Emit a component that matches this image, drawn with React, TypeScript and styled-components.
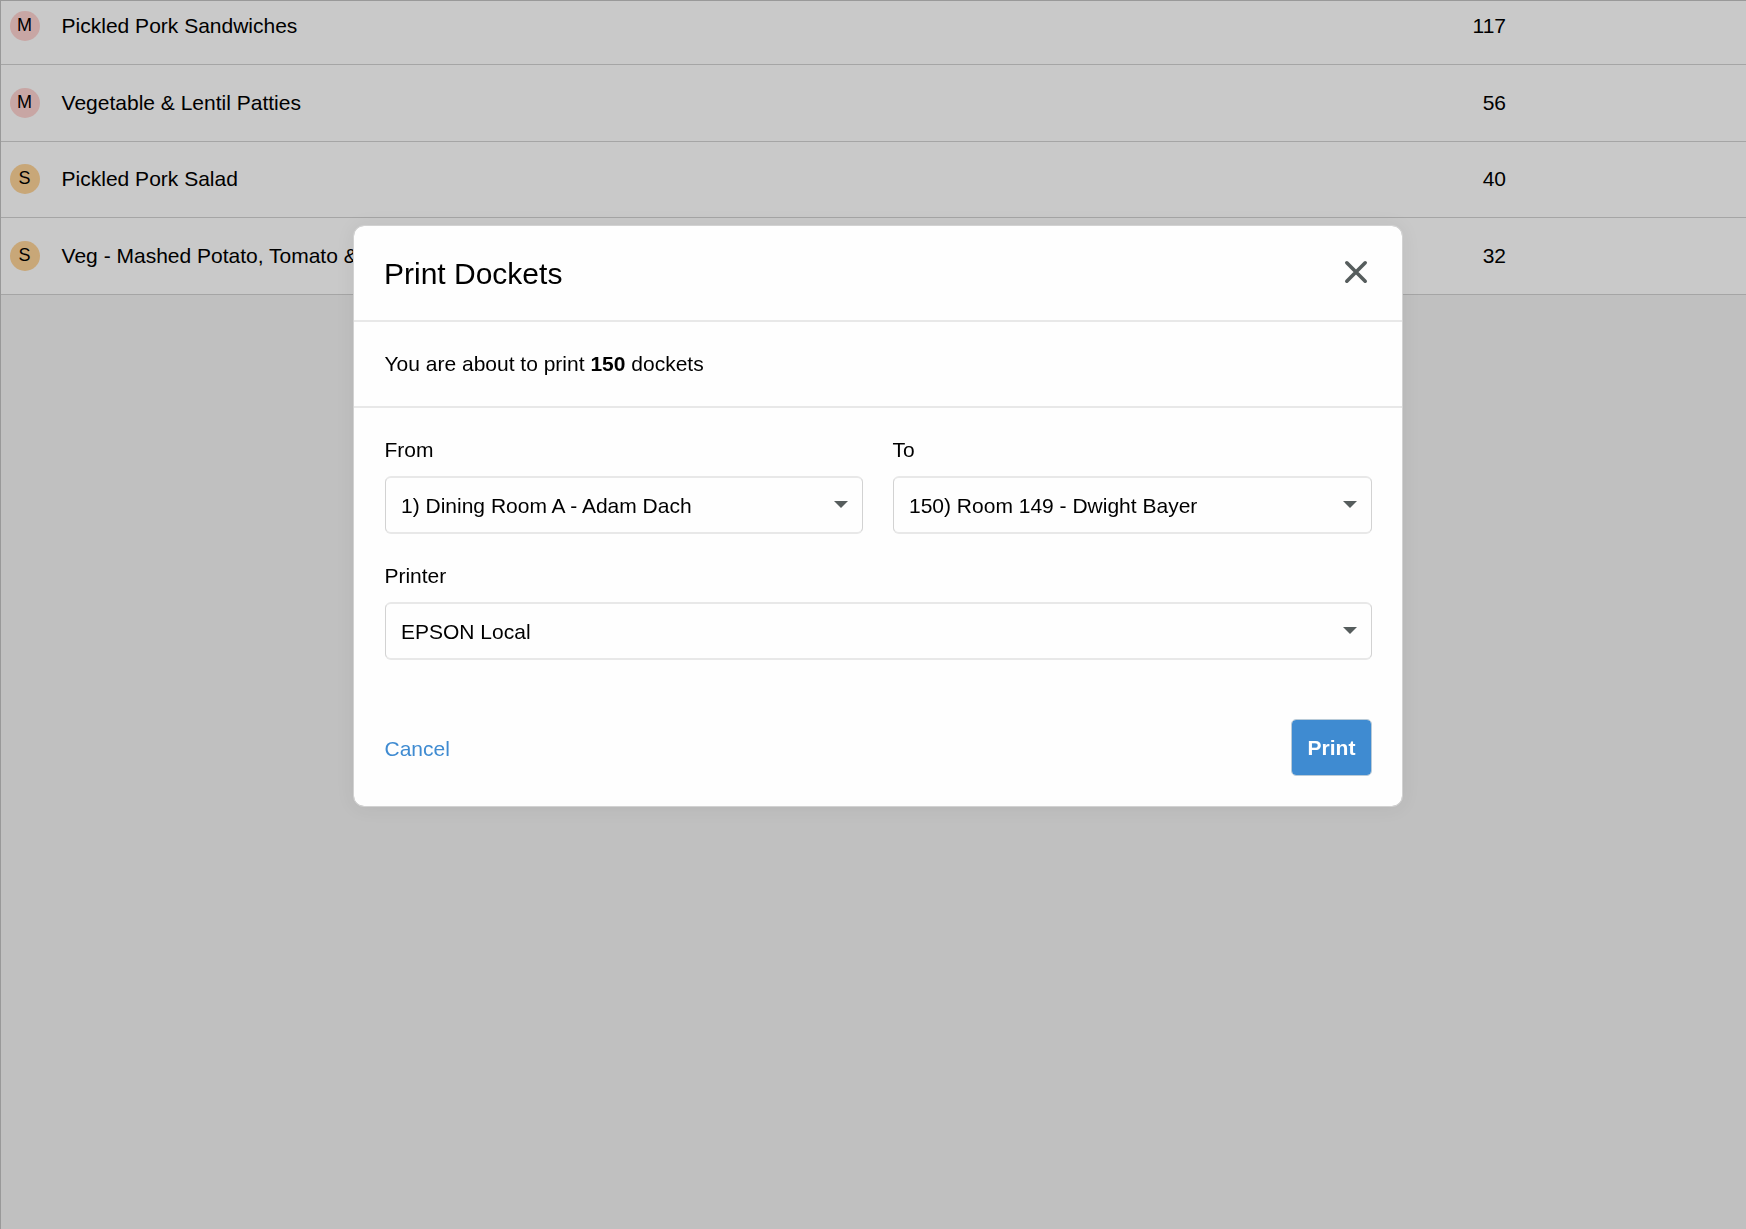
import React from "react";
import styled, { createGlobalStyle } from "styled-components";

const GlobalStyle = createGlobalStyle`
  *, *::before, *::after { box-sizing: border-box; }
  html, body { margin: 0; padding: 0; overflow: hidden; }
  body, button {
    font-family: "Liberation Sans", Arial, Helvetica, sans-serif;
    font-size: 21px;
    line-height: 24px;
    color: #000;
  }
`;

const Page = styled.main`
  height: 100vh;
  background: #c0c0c0;
  border-top: 1px solid #999;
  border-left: 1px solid #999;
  overflow: hidden;
`;

const MealList = styled.ul`
  list-style: none;
  margin: -12.67px 0 0;
  padding: 0;
`;

const MealRow = styled.li`
  display: grid;
  grid-template-columns: 30px 1fr 200px 240px;
  column-gap: 0;
  align-items: center;
  height: 76.67px;
  padding-left: 9px;
  background: #c9c9c9;
  border-bottom: 1px solid #a5a5a5;
`;

const Badge = styled.span<{ $tone: string }>`
  display: flex;
  align-items: center;
  justify-content: center;
  width: 30px;
  height: 30px;
  padding: 0 1px 1px 0;
  border-radius: 50%;
  background: ${(p) => p.$tone};
  font-size: 18px;
  line-height: 29px;
`;

const MealName = styled.span`
  padding-left: 21.6px;
  white-space: nowrap;
`;

const MealCount = styled.span`
  text-align: right;
`;

const Overlay = styled.div`
  position: fixed;
  inset: 0;
  display: flex;
  align-items: flex-start;
  justify-content: center;
  padding: 225px 0 0 10px;
`;

const Dialog = styled.section`
  display: flex;
  flex-direction: column;
  width: 1050px;
  height: 582px;
  background: #fefefe;
  background-clip: padding-box;
  border: 1px solid #d2d2d2;
  border-radius: 11px;
  box-shadow: 0 1px 20px rgba(0, 0, 0, 0.06);
`;

const DialogHeader = styled.header`
  display: flex;
  align-items: center;
  justify-content: space-between;
  height: 96px;
  padding: 0 34px 0 30px;
  border-bottom: 2px solid #e8e8e8;
`;

const Title = styled.h1`
  margin: 2px 0 0;
  font-size: 30px;
  line-height: 36px;
  font-weight: 400;
`;

const CloseButton = styled.button`
  display: flex;
  margin-bottom: 2px;
  padding: 0;
  border: 0;
  background: none;
  cursor: pointer;
`;

const Message = styled.p`
  display: flex;
  align-items: center;
  height: 86px;
  margin: 0;
  padding: 0 30.5px;
  border-bottom: 2px solid #e8e8e8;
  white-space: pre;
`;

const Form = styled.div`
  display: grid;
  grid-template-columns: 478px 479px;
  column-gap: 30px;
  row-gap: 30px;
  padding: 30px 30px 0 31px;
`;

const Field = styled.div<{ $wide?: boolean }>`
  grid-column: ${(p) => (p.$wide ? "1 / -1" : "auto")};
  display: flex;
  flex-direction: column;
  gap: 14px;
`;

const Label = styled.span`
  height: 24px;
  margin-left: -0.6px;
`;

const Select = styled.div`
  display: flex;
  align-items: center;
  justify-content: space-between;
  height: 58px;
  padding: 0 14px 0 15px;
  border: solid;
  border-width: 2px 1px;
  border-color: #e8e8e8 #d2d2d2;
  border-radius: 6px;
`;

const SelectValue = styled.span`
  padding-top: 2px;
`;

const Caret = styled.i`
  width: 0;
  height: 0;
  margin-top: -1px;
  border: 7.5px solid transparent;
  border-top-color: #565d5d;
  border-bottom: 0;
`;

const DialogFooter = styled.footer`
  display: flex;
  align-items: center;
  justify-content: space-between;
  margin-top: auto;
  padding: 0 30px 30px 30.5px;
`;

const CancelButton = styled.button`
  padding: 2px 0 0;
  border: 0;
  background: none;
  color: #3f8bd1;
  cursor: pointer;
`;

const PrintButton = styled.button`
  width: 81px;
  height: 57px;
  padding: 0;
  border: 1px solid #b9cbd8;
  border-radius: 5px;
  background: #3f8bd1;
  background-clip: padding-box;
  color: #fff;
  font-weight: 700;
  cursor: pointer;
`;

const meals = [
  { code: "M", name: "Pickled Pork Sandwiches", count: 117 },
  { code: "M", name: "Vegetable & Lentil Patties", count: 56 },
  { code: "S", name: "Pickled Pork Salad", count: 40 },
  { code: "S", name: "Veg - Mashed Potato, Tomato &", count: 32 },
];

const tones: Record<string, string> = { M: "#c8a6a4", S: "#c8a778" };

function SelectField({ label, value, wide }: { label: string; value: string; wide?: boolean }) {
  return (
    <Field $wide={wide}>
      <Label>{label}</Label>
      <Select>
        <SelectValue>{value}</SelectValue>
        <Caret />
      </Select>
    </Field>
  );
}

export default function App() {
  return (
    <>
      <GlobalStyle />
      <Page>
        <MealList>
          {meals.map((meal) => (
            <MealRow key={meal.name}>
              <Badge $tone={tones[meal.code]}>{meal.code}</Badge>
              <MealName>{meal.name}</MealName>
              <MealCount>{meal.count}</MealCount>
            </MealRow>
          ))}
        </MealList>
      </Page>
      <Overlay>
        <Dialog role="dialog" aria-label="Print Dockets">
          <DialogHeader>
            <Title>Print Dockets</Title>
            <CloseButton aria-label="Close">
              <svg width="24" height="24" viewBox="0 0 24 24" fill="none" stroke="#565d5d" strokeWidth="3.6" strokeLinecap="round">
                <path d="M2.8 2.8L21.2 21.2M21.2 2.8L2.8 21.2" />
              </svg>
            </CloseButton>
          </DialogHeader>
          <Message>
            You are about to print <b>150</b> dockets
          </Message>
          <Form>
            <SelectField label="From" value="1) Dining Room A - Adam Dach" />
            <SelectField label="To" value="150) Room 149 - Dwight Bayer" />
            <SelectField label="Printer" value="EPSON Local" wide />
          </Form>
          <DialogFooter>
            <CancelButton>Cancel</CancelButton>
            <PrintButton>Print</PrintButton>
          </DialogFooter>
        </Dialog>
      </Overlay>
    </>
  );
}
